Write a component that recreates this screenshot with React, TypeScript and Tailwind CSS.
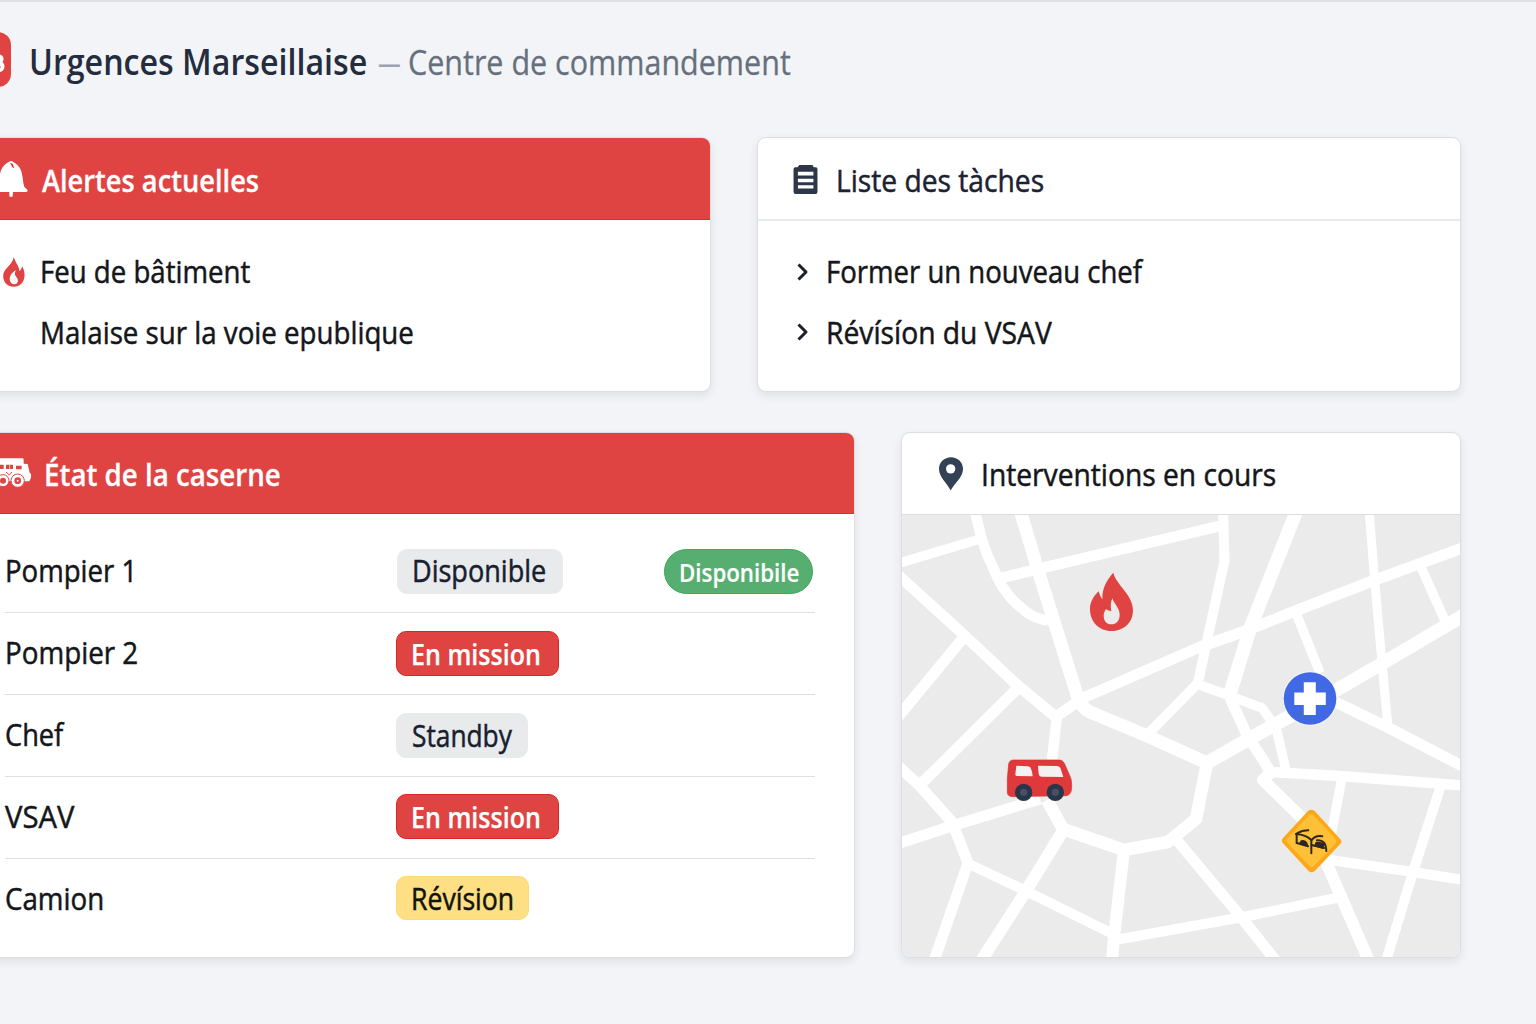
import { useLayoutEffect, useRef, useState, type ReactNode } from "react";
import clsx from "clsx";

/* Text condensed horizontally so that it fills exactly `width` pixels. */
function Fit({ width, className, children }: { width: number; className?: string; children: ReactNode }) {
  const ref = useRef<HTMLSpanElement>(null);
  const [scale, setScale] = useState(1);
  useLayoutEffect(() => {
    if (ref.current) setScale(width / ref.current.offsetWidth);
  }, [width]);
  return (
    <span className={clsx("block shrink-0 whitespace-nowrap", className)} style={{ width }}>
      <span ref={ref} className="inline-block origin-left" style={{ transform: `scaleX(${scale})` }}>
        {children}
      </span>
    </span>
  );
}

function BellIcon() {
  return (
    <svg className="h-9 w-7 shrink-0" viewBox="0 483 84 108" fill="white">
      <path d="M33 483 C45 487 60 499 64 514 C69 532 69 550 73 561 L83 570 L81 576 L39 576 L38 589 Q33 593 28 589 L28 576 L-14 576 L-16 570 L-7 561 C-3 550 -3 532 2 514 C6 499 21 487 33 483Z" />
      <path d="M30 488 L38 492 L43 505 L37 502Z" fill="#c93434" />
    </svg>
  );
}

function TruckIcon() {
  return (
    <svg className="h-[30px] w-8 shrink-0" viewBox="0 101 96 90">
      <path d="M-4 102 H67 Q71 102 71 106 V118 L83 119 L89 145 L93 149 V160 L88 171 H-4Z" fill="white" />
      <path d="M-4 121 H11 V134 H-4Z M18 121 H39 V134 H18Z M48 124 H65 V135 H48Z" fill="#df4442" />
      <path d="M29 121 V134" stroke="white" strokeWidth="2" />
      <path d="M18 143 L28 152 L36 143" fill="none" stroke="#df4442" strokeWidth="3" />
      <circle cx="9" cy="169" r="18" fill="white" stroke="#df4442" strokeWidth="3" />
      <circle cx="9" cy="169" r="9" fill="#df4442" />
      <circle cx="53" cy="169" r="20" fill="white" stroke="#df4442" strokeWidth="3" />
      <circle cx="53" cy="169" r="10" fill="#df4442" />
      <circle cx="53" cy="169" r="3" fill="white" />
    </svg>
  );
}

function SmallFlame() {
  return (
    <svg className="h-[30px] w-[22px] shrink-0" viewBox="8 109 65 90">
      <path
        d="M40 109 C44 125 56 136 57 152 C60 149 64 144 65 137 C70 146 73 156 72 166 C71 186 58 198 40 198 C21 198 8 185 8 165 C9 143 35 135 40 109Z"
        fill="#df4442"
      />
      <path d="M46 149 C34 155 26 168 28 179 C29 186 34 191 41 191 C48 191 53 186 52 178 C51 171 46 168 43 162 C43 157 44 153 46 149Z" fill="white" />
    </svg>
  );
}

function ClipboardIcon() {
  return (
    <svg className="h-[29px] w-[25px] shrink-0" viewBox="130 104 73 86">
      <path d="M148 104 H187 L191 111 H197 Q202 111 202 116 V184 Q202 190 196 190 H137 Q131 190 131 184 V116 Q131 111 136 111 H143Z" fill="#2d3748" />
      <path d="M144 124 H190 V135 H144Z M144 145 H190 V155 H144Z M144 164 H190 V174 H144Z" fill="white" />
    </svg>
  );
}

function PinIcon() {
  return (
    <svg className="h-[34px] w-6 shrink-0" viewBox="117 98 72 101">
      <path d="M152 198 C141 175 117 160 117 133 C117 113 133 98 153 98 C173 98 189 113 189 133 C189 160 164 175 152 198Z" fill="#334155" />
      <circle cx="152" cy="133" r="14" fill="white" />
    </svg>
  );
}

function Chevron() {
  return (
    <svg className="h-[18px] w-3 shrink-0" viewBox="0 0 12 18" fill="none" stroke="#1b212c" strokeWidth="3">
      <path d="M1.5 1.5 L9 9 L1.5 16.5" strokeLinejoin="round" />
    </svg>
  );
}

const roads: [number, string][] = [
  [9.5, "M898 563.5 L980 539"],
  [10.5, "M975 512 L982.3 541 C986 553 990 562 994.7 571 C999 582 1002 587 1005 590 C1010 598 1016 604 1021.7 608 C1028 614 1036 619 1048 620.5"],
  [13, "M1020 510 L1037 567 L1077 695 L1081 703 Q1084 709 1090 712 L1145 735 L1207 763"],
  [11, "M1001 578 L1042 568 L1224 525"],
  [10, "M1223 510 L1224.5 561 L1206 645 L1198 683 L1149 733"],
  [9.5, "M1197 684 L1230 696 L1262 708 L1272 722 L1277 732 L1286 770"],
  [13.5, "M1297 510 L1251 626 L1230.5 692"],
  [11, "M1230.5 690 L1231 700 L1247 735 L1272 774"],
  [11, "M1464 547.5 L1375 580 L1295 611 L1248 630 L1200 647 L1083 698 L1057 716"],
  [13.5, "M1464 615 L1383 663 L1340 688 L1285 719 L1247 740 L1207 763"],
  [9, "M1369 510 L1374.5 578 L1382 663 L1388 727"],
  [9.5, "M1420 565 L1446 623"],
  [9.5, "M1296 613 L1320 673"],
  [11, "M1325 697 L1387 727 L1464 767"],
  [10.5, "M1268 772 L1340 776 L1464 785.5"],
  [12, "M1271 772 L1263 780 L1310 826 L1326 862 L1369 961"],
  [9.5, "M1342 778 L1331 835"],
  [10, "M1330 860 L1413 872 L1464 880"],
  [10, "M1441 785 L1413 872 L1386 961"],
  [10, "M1341 897 L1243 917 L1115 940"],
  [11, "M1175 838 L1241 917 L1276 961"],
  [12.5, "M1207 763 L1196 819 L1168 842 L1124 850 L1063 829 L1047 800"],
  [10.5, "M1057 716 L1052 760"],
  [12, "M1124 850 L1114 937 L1112 961"],
  [12, "M1064 829 L1026 891 L981 961"],
  [11, "M898 843.5 L955 825 L1040 799"],
  [11, "M898 766 L919 785 L952 822 L968 863 L934 961"],
  [10, "M967 863 L1026 891 L1113 934"],
  [11, "M919 786 L1018 688"],
  [11, "M898 575 L963 634 L1016 684 L1057 718"],
  [11, "M964 637 L898 717"],
];

function CityMap() {
  return (
    <svg className="block h-[442px] w-full" viewBox="902 515 558 442" preserveAspectRatio="none">
      <rect x="902" y="515" width="558" height="442" fill="#ebebeb" />
      <g fill="none" stroke="white" strokeLinejoin="round">
        {roads.map(([w, d]) => (
          <path key={d} d={d} strokeWidth={w} />
        ))}
      </g>

      {/* fire */}
      <g transform="translate(900 425) scale(0.33333)">
        <path
          d="M640 443 C650 482 698 508 699 555 C699 595 670 618 634 618 C598 618 570 592 570 552 C570 530 582 512 596 499 C599 510 603 517 607 523 C606 490 620 465 640 443Z"
          fill="#df4442"
        />
        <path d="M637 520 C642 537 659 548 659 570 C659 588 648 598 634 598 C620 598 611 587 611 573 C611 565 614 558 618 553 C624 556 629 558 634 559 C631 545 632 530 637 520Z" fill="#ebebeb" />
      </g>

      {/* medical post */}
      <circle cx="1310" cy="698.5" r="27.3" fill="#f8f6ef" />
      <circle cx="1310" cy="698.5" r="26.3" fill="#4169e5" />
      <path d="M1303.8 682.3h12v10.3h10v12.5h-10v9.8h-12v-9.8h-9.5v-12.5h9.5z" fill="white" />

      {/* van */}
      <g transform="translate(900 680) scale(0.33333)">
        <path d="M340 240 H478 Q488 240 493 250 L510 289 Q516 300 515 325 Q513 345 500 347 L340 350 Q323 350 322 338 V295 L326 253 Q328 240 340 240Z" fill="#df393b" stroke="#df2f31" strokeWidth="2" />
        <path d="M349 257 L385 259 Q396 262 398 289 L349 288 Q346 287 346 283Z" fill="#f3f1f1" />
        <path d="M414 257 L472 258 Q479 259 482 266 L490 291 L424 290 Q417 289 416 281Z" fill="#f3f1f1" />
        <circle cx="371" cy="337" r="26" fill="#28364a" />
        <circle cx="371" cy="337" r="11" fill="#4b4f66" />
        <circle cx="466" cy="337" r="26" fill="#28364a" />
        <circle cx="466" cy="337" r="11" fill="#4b4f66" />
      </g>

      {/* hazard sign */}
      <g transform="translate(1180 700) scale(0.33333)">
        <path d="M384 333 Q394 325 404 333 L480 416 Q488 424 480 433 L405 512 Q395 521 385 512 L309 430 Q302 422 309 414Z" fill="#fda81b" />
        <path d="M387 346 Q394 339 401 346 L467 418 Q472 424 467 430 L402 498 Q395 505 388 498 L321 427 Q316 421 321 416Z" fill="#fec037" />
        <g fill="none" stroke="#2c2723" strokeWidth="6" strokeLinecap="round">
          <path d="M350 401 Q366 391 385 391" />
          <path d="M348 402 Q378 404 394 420 V460" />
          <path d="M350 403 V429 L384 439" />
          <path d="M395 420 Q408 404 427 409" />
          <path d="M411 421 Q438 418 439 453" />
          <path d="M395 435 L432 444" />
        </g>
        <path d="M357 430 L363 421 Q376 417 382 428 L386 440Z M402 439 L407 426 Q421 423 433 431 L431 447Z" fill="#2c2723" />
      </g>
    </svg>
  );
}

const cardBase = "overflow-hidden border border-[#dcdee3] bg-white rounded-[9px] shadow-[0_4px_9px_rgba(30,41,70,0.09)]";
const thick = "[-webkit-text-stroke:0.5px_currentColor]";

type Tone = "gray" | "red" | "yellow";
const tones: Record<Tone, string> = {
  gray: "bg-[#e9eaec] text-[#17202e] border-[#e9eaec]",
  red: "bg-[#df4442] text-white border-[#db2626] font-semibold text-[29.5px] [-webkit-text-stroke:0.25px_currentColor]",
  yellow: "bg-[#fedf83] text-[#11130d] border-[#fdd978]",
};

const crew: { name: string; nw: number; status: string; sw: number; bw: string; tone: Tone }[] = [
  { name: "Pompier 1", nw: 132, status: "Disponible", sw: 134, bw: "w-[166px] ml-px pl-[14px] pb-[3px] h-[45px]", tone: "gray" },
  { name: "Pompier 2", nw: 133, status: "En mission", sw: 130, bw: "w-[163px] pl-[14px] h-[45px] pt-px", tone: "red" },
  { name: "Chef", nw: 58, status: "Standby", sw: 100, bw: "w-[132px] pl-[15px] pb-px h-[45px]", tone: "gray" },
  { name: "VSAV", nw: 69, status: "En mission", sw: 130, bw: "w-[163px] pl-[14px] h-[45px] -mt-[2px] pt-px", tone: "red" },
  { name: "Camion", nw: 99, status: "Révísion", sw: 103, bw: "w-[133px] pl-[14px] h-[44px] -mt-[5px]", tone: "yellow" },
];

export default function App() {
  return (
    <div className="h-[1024px] w-[1536px] overflow-hidden border-t-2 border-[#e0e2e5] bg-[#f3f4f7] font-['Open_Sans','Noto_Sans',sans-serif] text-[30.5px] leading-10 font-normal text-[#14161a]">
      <header className="flex h-[135px] items-start pt-[30px]">
        <div className="-ml-11 flex h-[55px] w-[55px] shrink-0 items-center justify-end overflow-hidden rounded-[13px] bg-[#df4442]">
          <svg className="mt-1 mr-1.5 h-6 w-6" viewBox="0 0 24 24" fill="white">
            <circle cx="18" cy="9" r="4.6" />
            <circle cx="18" cy="16.5" r="5.5" />
            <rect x="0" y="5" width="16" height="17" />
            <circle cx="17.5" cy="17" r="2" fill="#df4442" />
          </svg>
        </div>
        <h1 className="ml-[18px] flex pt-1 text-[35.5px] leading-[50px]">
          <Fit width={338} className="font-semibold text-[#232d3d]">Urgences Marseillaise</Fit>
          <Fit width={23} className="ml-[11px] font-normal text-[#9ca3af]">—</Fit>
          <Fit width={383} className="ml-[7px] font-normal text-[#66707d] [-webkit-text-stroke:0.3px_currentColor]">Centre de commandement</Fit>
        </h1>
      </header>

      <main className="-ml-12 flex w-[1509px] flex-col gap-10">
        <div className="flex h-[255px] gap-[47px]">
          <section className={clsx(cardBase, "w-[759px]")}>
            <h2 className="-mx-px -mt-px flex h-[83px] items-center border border-[#d92f2d] bg-[#df4442] pt-px pl-[47px] font-semibold text-white [-webkit-text-stroke:0.3px_currentColor]">
              <BellIcon />
              <Fit width={217} className="ml-3.5 pt-px">Alertes actuelles</Fit>
            </h2>
            <ul className={clsx("flex flex-col gap-5 pt-8 pl-[47px]", thick)}>
              <li className="flex h-10 items-center pl-[3px]">
                <SmallFlame />
                <Fit width={210} className="ml-[15px] pb-[2px]">Feu de bâtiment</Fit>
              </li>
              <li className="pl-10">
                <Fit width={374}>Malaise sur la voie epublique</Fit>
              </li>
            </ul>
          </section>

          <section className={clsx(cardBase, "-ml-px w-[704px]")}>
            <h2 className={clsx("flex h-[83px] items-center border-b-2 border-[#e9eaeb] pt-px pl-[35px] text-[#1b2230]", thick)}>
              <ClipboardIcon />
              <Fit width={208} className="ml-[18px] pt-px">Liste des tàches</Fit>
            </h2>
            <ul className={clsx("flex flex-col gap-5 pt-[31px] pl-[39px]", thick)}>
              <li className="flex h-10 items-center">
                <Chevron />
                <Fit width={316} className="ml-[17px] pb-[2px]">Former un nouveau chef</Fit>
              </li>
              <li className="flex h-10 items-center">
                <Chevron />
                <Fit width={226} className="ml-[17px]">Révísíon du VSAV</Fit>
              </li>
            </ul>
          </section>
        </div>

        <div className="flex h-[526px] gap-[46px]">
          <section className={clsx(cardBase, "w-[903px]")}>
            <h2 className="-mx-px -mt-px flex h-[82px] items-center border border-[#d92f2d] bg-[#df4442] pl-[47px] font-semibold text-white [-webkit-text-stroke:0.3px_currentColor]">
              <TruckIcon />
              <Fit width={237} className="ml-[12px] pt-px">État de la caserne</Fit>
            </h2>
            <div className={clsx("mr-[39px] ml-[52px] flex flex-col pt-[17px]", thick)}>
              {crew.map((c, i) => (
                <div key={c.name} className={clsx("flex h-[82px] items-center", i < crew.length - 1 && "border-b border-[#dddfe3]")}>
                  <div className="w-[391px] pb-1">
                    <Fit width={c.nw}>{c.name}</Fit>
                  </div>
                  <div className={clsx("flex shrink-0 items-center rounded-[10px] border", c.bw, tones[c.tone])}>
                    <Fit width={c.sw}>{c.status}</Fit>
                  </div>
                  {i === 0 && (
                    <div className="mr-0.5 ml-auto flex h-[45px] w-[149px] items-center rounded-full border border-[#3da85a] bg-[#56ae70] pl-[14px] text-[26px] font-semibold text-white [-webkit-text-stroke:0.2px_currentColor]">
                      <Fit width={120}>Disponibile</Fit>
                    </div>
                  )}
                </div>
              ))}
            </div>
          </section>

          <section className={clsx(cardBase, "w-[560px]")}>
            <h2 className={clsx("flex h-[82px] items-center border-b border-[#dcdddf] pl-[37px]", thick)}>
              <PinIcon />
              <Fit width={295} className="ml-[18px] pt-px">Interventions en cours</Fit>
            </h2>
            <CityMap />
          </section>
        </div>
      </main>
    </div>
  );
}
